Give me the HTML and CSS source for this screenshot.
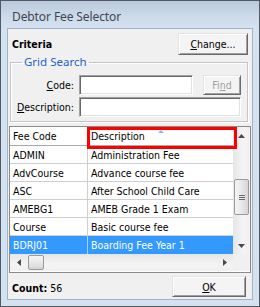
FILE: index.html
```html
<!DOCTYPE html>
<html>
<head>
<meta charset="utf-8">
<link rel="stylesheet" href="styles.css">
</head>
<body>
<div class="window">
  <div class="titlebar"><span class="title">Debtor Fee Selector</span></div>
  <div class="content">
    <div class="criteria-row">
      <span class="criteria">Criteria</span>
      <div class="btn change"><u>C</u>hange...</div>
    </div>
    <fieldset class="search">
      <legend>Grid Search</legend>
      <div class="form">
        <div class="lbl"><u>C</u>ode:</div>
        <div class="code-line">
          <div class="tb code"></div>
          <div class="btn find">Fi<u>n</u>d</div>
        </div>
        <div class="lbl"><u>D</u>escription:</div>
        <div class="tb desc"></div>
      </div>
    </fieldset>
    <div class="grid">
      <div class="grid-main">
        <div class="grid-data">
          <div class="row head">
            <div class="cell">Fee Code</div>
            <div class="cell sorted">Description<span class="sort"></span></div>
          </div>
          <div class="row"><div class="cell">ADMIN</div><div class="cell">Administration Fee</div></div>
          <div class="row"><div class="cell">AdvCourse</div><div class="cell">Advance course fee</div></div>
          <div class="row"><div class="cell">ASC</div><div class="cell">After School Child Care</div></div>
          <div class="row"><div class="cell">AMEBG1</div><div class="cell">AMEB Grade 1 Exam</div></div>
          <div class="row"><div class="cell">Course</div><div class="cell">Basic course fee</div></div>
          <div class="row sel"><div class="cell">BDRJ01</div><div class="cell">Boarding Fee Year 1</div></div>
          <div class="highlight"></div>
        </div>
        <div class="vscroll">
          <div class="arrow-btn"><svg width="7" height="4" viewBox="0 0 7 4"><path d="M0 4 L3.5 0 L7 4 Z" fill="#4a4a4a"/></svg></div>
          <div class="vtrack">
            <div class="vthumb"><span class="grip"></span></div>
          </div>
          <div class="arrow-btn"><svg width="7" height="4" viewBox="0 0 7 4"><path d="M0 0 L3.5 4 L7 0 Z" fill="#4a4a4a"/></svg></div>
        </div>
      </div>
      <div class="hscroll-row">
        <div class="hscroll">
          <div class="arrow-btn h"><svg width="4" height="7" viewBox="0 0 4 7"><path d="M4 0 L0 3.5 L4 7 Z" fill="#4a4a4a"/></svg></div>
          <div class="htrack"><div class="hthumb"></div></div>
          <div class="arrow-btn h"><svg width="4" height="7" viewBox="0 0 4 7"><path d="M0 0 L4 3.5 L0 7 Z" fill="#4a4a4a"/></svg></div>
        </div>
        <div class="corner"></div>
      </div>
    </div>
    <div class="footer">
      <span class="count"><b>Count:</b> 56</span>
      <div class="btn ok"><u>O</u>K</div>
    </div>
  </div>
</div>
</body>
</html>
```

FILE: styles.css
```css
* { box-sizing: border-box; }
html, body { margin: 0; padding: 0; }
body {
  width: 260px;
  height: 307px;
  overflow: hidden;
  font-family: "DejaVu Sans Condensed", "Liberation Sans", sans-serif;
  font-size: 10.5px;
  color: #000;
}
.window {
  width: 260px;
  height: 307px;
  border: 1px solid #4f5a66;
  background: linear-gradient(to bottom, #b9c9db 0px, #cbd9e9 14px, #d4e2f1 28px, #d3e1f1 100%);
  padding: 0 6px 6px 6px;
  display: flex;
  flex-direction: column;
}
.titlebar {
  height: 27px;
  display: flex;
  align-items: center;
  padding-left: 5px;
  padding-top: 4px;
}
.title {
  font-family: "Noto Sans", "Open Sans", sans-serif;
  font-size: 12px;
  color: #3e4650;
  letter-spacing: -0.1px;
}
.content {
  flex: 1;
  background: #f0f0f0;
  border: 1px solid #a3b3c6;
  display: flex;
  flex-direction: column;
}
.criteria-row {
  margin-top: 4px;
  height: 22px;
  display: flex;
  align-items: center;
  justify-content: space-between;
  padding: 0 4px;
}
.criteria { font-weight: bold; }
.btn {
  display: flex;
  align-items: center;
  justify-content: center;
  background: #f4f4f4;
  border: 1px solid;
  border-color: #e3e3e3 #696969 #696969 #e3e3e3;
  box-shadow: inset 1px 1px 0 #ffffff, inset -1px -1px 0 #a0a0a0;
}
.change { width: 70px; height: 22px; }
.search {
  margin: 0 4px 0 2px;
  padding: 6px 6px 4px 4px;
  border: 1px solid #c4c4c4;
  box-shadow: 1px 1px 0 #fff, inset 1px 1px 0 #fff;
  min-width: 0;
}
.search legend {
  margin-left: 7px;
  padding: 0 2px;
  color: #1a5fd2;
  font-family: "Noto Sans", "Open Sans", sans-serif;
  font-size: 11.5px;
  line-height: 14px;
}
.form {
  display: grid;
  grid-template-columns: 59px 1fr;
  column-gap: 5px;
  row-gap: 2px;
  align-items: center;
}
.lbl { text-align: right; white-space: nowrap; }
.code-line { display: flex; align-items: center; }
.tb {
  height: 20px;
  background: #fff;
  border: 1px solid;
  border-color: #a0a0a0 #ffffff #ffffff #a0a0a0;
  box-shadow: inset 1px 1px 0 #696969, inset -1px -1px 0 #e3e3e3;
}
.code { width: 114px; }
.desc { width: 162px; }
.find {
  margin-left: 10px;
  width: 38px;
  height: 20px;
  color: #a0a0a0;
}
.grid {
  margin: 4px 0 0 1px;
  width: 242px;
  height: 147px;
  border: 1px solid #8a8a8a;
  background: #fff;
  display: flex;
  flex-direction: column;
}
.grid-main { display: flex; height: 127px; }
.grid-data { flex: 1; position: relative; }
.row {
  display: grid;
  grid-template-columns: 78px 1fr;
  height: 18px;
  border-bottom: 1px solid #cfcfcf;
}
.row.head { height: 19px; border-bottom-color: #a8a8a8; }
.cell {
  display: flex;
  align-items: center;
  padding-left: 3px;
  white-space: nowrap;
  overflow: hidden;
  position: relative;
}
.cell:first-child { border-right: 1px solid #cfcfcf; }
.row.sel { background: #3399ff; color: #fff; border-bottom: none; }
.row.sel .cell:first-child { border-right-color: #a9d3ff; }
.sort {
  position: absolute;
  top: 3px;
  left: 70px;
  width: 0;
  height: 0;
  border-left: 3px solid transparent;
  border-right: 3px solid transparent;
  border-bottom: 3px solid #8fb8e8;
}
.highlight {
  position: absolute;
  left: 77px;
  top: 0;
  width: 150px;
  height: 22px;
  border: 3px solid #ff0000;
  z-index: 2;
}
.vscroll {
  width: 17px;
  display: flex;
  flex-direction: column;
  background: linear-gradient(to right, #e6e6e6, #f4f4f4 60%, #f0f0f0);
}
.arrow-btn {
  width: 17px;
  height: 17px;
  display: flex;
  align-items: center;
  justify-content: center;
  flex-shrink: 0;
}
.vtrack { flex: 1; padding-top: 35px; display: flex; justify-content: center; }
.vthumb {
  width: 15px;
  height: 36px;
  border: 1px solid #9a9a9a;
  border-radius: 2px;
  background: linear-gradient(to right, #f5f5f5, #e8e8e8 50%, #d6d6d6);
  display: flex;
  align-items: center;
  justify-content: center;
}
.grip {
  width: 6px;
  height: 5px;
  background: repeating-linear-gradient(to bottom, #6a6a6a 0 1px, transparent 1px 2px);
}
.hscroll-row { display: flex; height: 17px; }
.hscroll {
  flex: 1;
  display: flex;
  background: linear-gradient(to bottom, #e6e6e6, #f4f4f4 60%, #f0f0f0);
}
.htrack { flex: 1; padding-left: 1px; display: flex; align-items: center; }
.hthumb {
  width: 16px;
  height: 15px;
  border: 1px solid #9a9a9a;
  border-radius: 2px;
  background: linear-gradient(to bottom, #f5f5f5, #e8e8e8 50%, #d6d6d6);
}
.corner { width: 17px; background: #f0f0f0; }
.footer {
  flex: 1;
  display: flex;
  justify-content: space-between;
  align-items: flex-start;
  padding: 3px 6px 0 4px;
}
.count { margin-top: 6px; }
.ok { width: 74px; height: 21px; }
u { text-decoration: underline; text-underline-offset: 1px; }
```
